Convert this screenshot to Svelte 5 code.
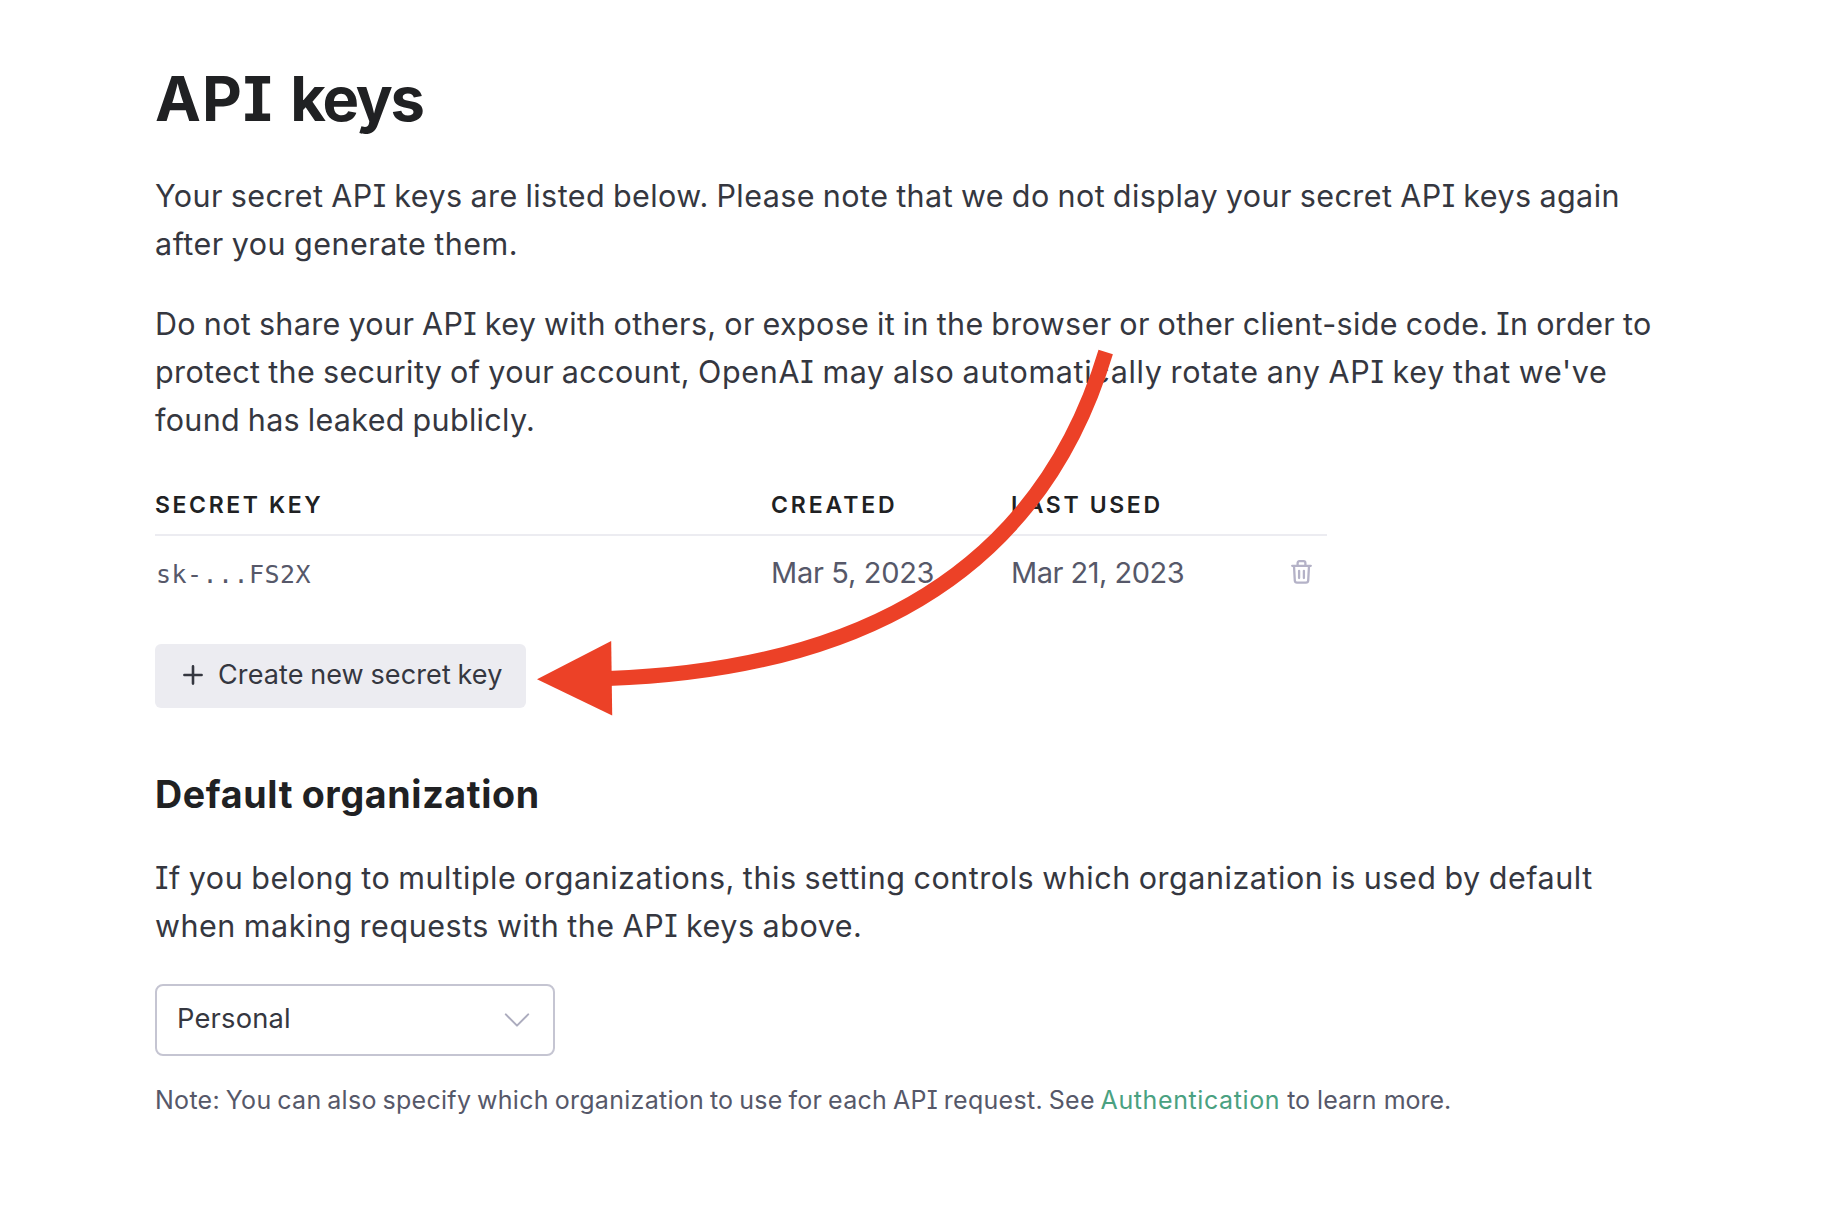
<script>
  const keys = [{ key: 'sk-...FS2X', created: 'Mar 5, 2023', used: 'Mar 21, 2023' }];
</script>

<main class="page">
  <h1><span class="w1">API</span> <span class="w2">keys</span></h1>

  <p class="body intro">
    <span class="line t1">Your secret API keys are listed below. Please note that we do not display your secret API keys again</span>
    <span class="line t2">after you generate them.</span>
  </p>
  <p class="body warning">
    <span class="line t3">Do not share your API key with others, or expose it in the browser or other client-side code. In order to</span>
    <span class="line t4"><span class="t4a">protect the security of your account,</span> OpenAI may also automatically rotate any API key that we've</span>
    <span class="line t5">found has leaked publicly.</span>
  </p>

  <div class="table">
    <div class="row head">
      <span class="h-key">Secret key</span>
      <span class="h-created">Created</span>
      <span class="h-used">Last used</span>
      <span></span>
    </div>
    {#each keys as k}
      <div class="row item">
        <span class="mono">{k.key}</span>
        <span class="created">{k.created}</span>
        <span class="used">{k.used}</span>
        <svg class="trash" viewBox="0 0 21 24" width="21" height="24" fill="none" stroke="#b4b2c7" stroke-width="2.3" stroke-linecap="round" stroke-linejoin="round">
          <path d="M1.2 5.8H19.8M6.6 5.6V3.2Q6.6 1.2 8.4 1.2H12.6Q14.4 1.2 14.4 3.2V5.6M3 6L3.8 20.6Q4 22.6 6 22.6H15Q17 22.6 17.2 20.6L18 6M8.1 10.8V18M12.9 10.8V18" />
        </svg>
      </div>
    {/each}
  </div>

  <button class="create">
    <svg viewBox="0 0 20 20" width="20" height="20" stroke="#353740" stroke-width="2.6" stroke-linecap="round">
      <path d="M1.4 10H18.6M10 1.4V18.6" />
    </svg>
    <span>Create new secret key</span>
  </button>

  <h2>Default organization</h2>
  <p class="body org">
    <span class="line t6">If you belong to multiple organizations, this setting controls which organization is used by default</span>
    <span class="line t7">when making requests with the API keys above.</span>
  </p>

  <div class="select" role="combobox" aria-expanded="false" aria-controls="orgs" tabindex="0">
    <span>Personal</span>
    <svg viewBox="0 0 26 14" width="26" height="14" fill="none" stroke="#acacbe" stroke-width="2" stroke-linecap="round" stroke-linejoin="round">
      <path d="M1.8 1.4L13 12.6L24.2 1.4" />
    </svg>
  </div>

  <p class="note"><span class="n1">Note: You can also specify which organization to use for each API request. See{' '}</span><span class="link">Authentication</span><span class="n2">{' '}to learn more.</span></p>

  <svg class="arrow" viewBox="0 0 1848 1228" width="1848" height="1228">
    <path d="M1105.7 352Q1012 664 608 678.6" fill="none" stroke="#ec4127" stroke-width="15" />
    <path d="M537 679.2L611.2 641L612.2 715.6Z" fill="#ec4127" />
  </svg>
</main>

<style>
  :global(body) { margin: 0; background: #fff; }
  .page {
    position: relative;
    box-sizing: border-box;
    width: 1848px;
    height: 1228px;
    padding: 63px 155px 0;
    overflow: hidden;
    font-family: Inter, "Liberation Sans", sans-serif;
    font-feature-settings: "cv08";
    color: #353740;
  }
  h1, h2, p { margin: 0; }
  h1 {
    font-size: 61.5px;
    line-height: 72px;
    font-weight: 700;
    word-spacing: 2.4px;
    color: #202123;
  }
  .w1 { letter-spacing: 1.1px; }
  .w2 { letter-spacing: -2.2px; }
  .body { font-size: 30.5px; line-height: 48px; word-spacing: -1.2px; }
  .line { display: block; white-space: nowrap; }
  .intro { margin-top: 37px; }
  .warning { margin-top: 32px; }
  .t1 { letter-spacing: 0.44px; }
  .t2 { letter-spacing: 0.5px; }
  .t3 { letter-spacing: 0.362px; }
  .t4 { letter-spacing: 0.67px; }
  .t4a { letter-spacing: 0.38px; }
  .t5 { letter-spacing: 0.33px; }
  .t6 { letter-spacing: 0.545px; }
  .t7 { letter-spacing: 0.53px; }

  .table { width: 1172px; margin-top: 49px; }
  .row {
    display: grid;
    grid-template-columns: 616px 240px 1fr 21px;
    align-items: center;
    white-space: nowrap;
  }
  .head {
    padding-bottom: 17px;
    border-bottom: 2px solid #ececf1;
    font-size: 23px;
    line-height: 24px;
    font-weight: 600;
    text-transform: uppercase;
    color: #202123;
  }
  .h-key { letter-spacing: 2.6px; }
  .h-created { letter-spacing: 2.9px; }
  .h-used { letter-spacing: 2.65px; }
  .item {
    padding: 17px 15px 0 0;
    font-size: 29px;
    line-height: 40px;
    color: #565869;
  }
  .created { letter-spacing: -0.3px; }
  .used { letter-spacing: -0.5px; }
  .mono {
    padding: 4px 0 0 1px;
    font-family: "DejaVu Sans Mono", monospace;
    font-size: 25px;
    line-height: 36px;
    letter-spacing: 0.45px;
  }
  .trash { display: block; margin-bottom: 2px; }

  .create {
    display: flex;
    align-items: center;
    gap: 15px;
    box-sizing: border-box;
    width: 371px;
    height: 64px;
    margin-top: 51px;
    padding: 0 0 3px 28px;
    border: 0;
    border-radius: 6px;
    background: #ececf1;
    font: inherit;
    font-size: 27px;
    line-height: 32px;
    letter-spacing: 0.1px;
    word-spacing: -1px;
    white-space: nowrap;
    color: #353740;
  }
  h2 {
    margin-top: 63px;
    font-size: 37.6px;
    line-height: 48px;
    font-weight: 700;
    letter-spacing: 0.66px;
    word-spacing: -1px;
    color: #202123;
  }
  .org { margin-top: 35px; }
  .select {
    display: flex;
    align-items: center;
    justify-content: space-between;
    box-sizing: border-box;
    width: 400px;
    height: 72px;
    margin-top: 34px;
    padding: 0 23px 0 20px;
    border: 2px solid #c5c5d2;
    border-radius: 8px;
    font-size: 27.3px;
    line-height: 32px;
    letter-spacing: 0.2px;
  }
  .select span { padding-bottom: 3px; }
  .note {
    margin-top: 28px;
    font-size: 25px;
    line-height: 32px;
    white-space: pre;
    color: #565869;
  }
  .n1 { letter-spacing: 0.285px; word-spacing: -1.5px; }
  .link { color: #4aa181; letter-spacing: 0.6px; }
  .arrow { position: absolute; left: 0; top: 0; pointer-events: none; }
</style>
